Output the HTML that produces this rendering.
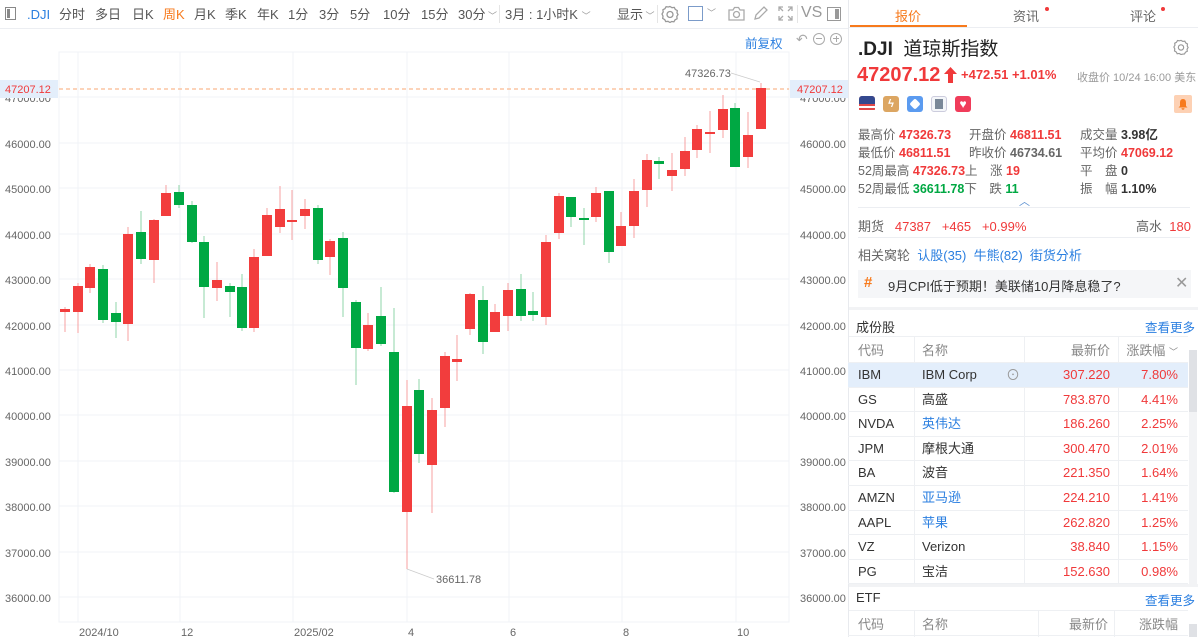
<!DOCTYPE html>
<html><head><meta charset="utf-8"><style>
*{margin:0;padding:0;box-sizing:border-box}
body{width:1198px;height:637px;overflow:hidden;background:#fff;font-family:"Liberation Sans","Noto Sans CJK SC",sans-serif;color:#333;position:relative}
.a{position:absolute;white-space:nowrap}
.tb{font-size:13px;color:#555;top:6px;line-height:18px}
.g{color:#666}.r{color:#f0393a}.gr{color:#00a843}.b{color:#2b7fe0}
.st{font-size:12.5px;line-height:16px}
.row{position:absolute;left:848px;width:340px;height:24.6px;font-size:13px;border-bottom:1px solid #eef0f3}
.row span{position:absolute;top:0;line-height:24px;height:24px}
</style></head><body>
<!-- toolbar -->
<div class="a" style="left:0;top:0;width:848px;height:29px;border-bottom:1px solid #eceef2"></div>
<div class="a" style="left:5px;top:7px;width:11px;height:13px;border:1.5px solid #888"></div>
<div class="a" style="left:7px;top:9px;width:3px;height:9px;background:#888"></div>
<div class="a tb" style="left:27px;color:#2b7fe0">.DJI</div>
<div class="a tb" style="left:59px">分时</div>
<div class="a tb" style="left:95px">多日</div>
<div class="a tb" style="left:132px">日K</div>
<div class="a tb" style="left:163px;color:#f77a1c">周K</div>
<div class="a tb" style="left:194px">月K</div>
<div class="a tb" style="left:225px">季K</div>
<div class="a tb" style="left:257px">年K</div>
<div class="a tb" style="left:288px">1分</div>
<div class="a tb" style="left:319px">3分</div>
<div class="a tb" style="left:350px">5分</div>
<div class="a tb" style="left:383px">10分</div>
<div class="a tb" style="left:421px">15分</div>
<div class="a tb" style="left:458px">30分<span style="font-size:9px;color:#999"> ﹀</span></div>
<div class="a" style="left:499px;top:5px;width:1px;height:18px;background:#e5e5e5"></div>
<div class="a tb" style="left:505px">3月 : 1小时K <span style="font-size:9px;color:#999">﹀</span></div>
<div class="a tb" style="left:617px">显示<span style="font-size:9px;color:#999"> ﹀</span></div>
<div class="a" style="left:657px;top:5px;width:1px;height:18px;background:#e5e5e5"></div>
<svg class="a" style="left:661px;top:5px" width="18" height="18" viewBox="0 0 18 18" fill="none" stroke="#999" stroke-width="1.3"><path d="M9 1.5l2 1.2 2.3-.3 1 2 2 1.2-.3 2.3L17 9.5l-1.2 2 .3 2.3-2 1-1.2 2-2.3-.3L9 17.5l-2-1.2-2.3.3-1-2-2-1.2.3-2.3L1 9l1.2-2-.3-2.3 2-1 1.2-2 2.3.3z"/><circle cx="9" cy="9.5" r="3"/></svg>
<div class="a" style="left:688px;top:6px;width:15px;height:15px;border:1.5px solid #7b9bc9"></div>
<div class="a" style="left:707px;top:6px;font-size:9px;color:#999">﹀</div>
<svg class="a" style="left:728px;top:6px" width="17" height="15" viewBox="0 0 17 15" fill="none" stroke="#aaa" stroke-width="1.3"><path d="M1 4h4l1.5-2.5h4L12 4h4v10H1z"/><circle cx="8.5" cy="8.5" r="3"/></svg>
<svg class="a" style="left:753px;top:6px" width="15" height="15" viewBox="0 0 15 15" fill="none" stroke="#aaa" stroke-width="1.3"><path d="M2 13l1-4 8-8 3 3-8 8z"/></svg>
<svg class="a" style="left:778px;top:6px" width="15" height="15" viewBox="0 0 15 15" fill="none" stroke="#aaa" stroke-width="1.3"><path d="M1 5V1h4M10 1h4v4M14 10v4h-4M5 14H1v-4M1 1l4 4M14 1l-4 4M14 14l-4-4M1 14l4-4"/></svg>
<div class="a" style="left:797px;top:5px;width:1px;height:18px;background:#e5e5e5"></div>
<div class="a" style="left:801px;top:4px;font-size:16px;color:#999">VS</div>
<div class="a" style="left:827px;top:7px;width:14px;height:14px;border:1.5px solid #999"></div>
<div class="a" style="left:835px;top:9px;width:4px;height:10px;background:#999"></div>
<div class="a b" style="left:745px;top:33px;font-size:12.5px">前复权</div>
<div class="a" style="left:796px;top:31px;font-size:14px;color:#aaa">↶</div>
<div class="a" style="left:813px;top:33px;width:12px;height:12px;border:1px solid #aaa;border-radius:50%"></div>
<div class="a" style="left:816px;top:38px;width:6px;height:1px;background:#aaa"></div>
<div class="a" style="left:830px;top:33px;width:12px;height:12px;border:1px solid #aaa;border-radius:50%"></div>
<div class="a" style="left:833px;top:38px;width:6px;height:1px;background:#aaa"></div>
<div class="a" style="left:835.5px;top:36px;width:1px;height:6px;background:#aaa"></div>

<!-- chart -->
<svg class="a" style="left:0;top:0" width="848" height="637" font-family="Liberation Sans,sans-serif" font-size="11">
<g stroke="#f0f3f7" stroke-width="1">
<path d="M59 52H789V622H59z" fill="none"/>
<path d="M59 97H789M59 143H789M59 188H789M59 234H789M59 279H789M59 325H789M59 370H789M59 415H789M59 461H789M59 506H789M59 552H789M59 597H789"/>
<path d="M78 52V622M180 52V622M293 52V622M407 52V622M509 52V622M622 52V622M736 52V622"/>
</g>
<g fill="#666">
<text x="5" y="148">46000.00</text><text x="5" y="193">45000.00</text><text x="5" y="239">44000.00</text><text x="5" y="284">43000.00</text><text x="5" y="330">42000.00</text><text x="5" y="375">41000.00</text><text x="5" y="420">40000.00</text><text x="5" y="466">39000.00</text><text x="5" y="511">38000.00</text><text x="5" y="557">37000.00</text><text x="5" y="602">36000.00</text>
<text x="800" y="148">46000.00</text><text x="800" y="193">45000.00</text><text x="800" y="239">44000.00</text><text x="800" y="284">43000.00</text><text x="800" y="330">42000.00</text><text x="800" y="375">41000.00</text><text x="800" y="420">40000.00</text><text x="800" y="466">39000.00</text><text x="800" y="511">38000.00</text><text x="800" y="557">37000.00</text><text x="800" y="602">36000.00</text>
<text x="5" y="102">47000.00</text><text x="800" y="102">47000.00</text>
<text x="79" y="636">2024/10</text><text x="181" y="636">12</text><text x="294" y="636">2025/02</text><text x="408" y="636">4</text><text x="510" y="636">6</text><text x="623" y="636">8</text><text x="737" y="636">10</text>
<text x="685" y="77">47326.73</text><text x="436" y="583">36611.78</text>
</g>
<path d="M731 73L760 82M407 569L434 579" stroke="#ccc" stroke-width="0.8"/>
<rect x="0" y="80" width="58" height="18" fill="#e3eefb"/><rect x="790" y="80" width="58" height="18" fill="#e3eefb"/>
<path d="M59 89H789" stroke="#f9b98f" stroke-dasharray="4 3" stroke-width="1.2"/>
<text x="5" y="93" fill="#f0393a">47207.12</text><text x="797" y="93" fill="#f0393a">47207.12</text>
<g stroke-width="1">
<g fill="#f23d3d" stroke="#f7a0a0">
<path d="M65 307V332M78 283V333M90 264V293M128 227V341M154 219V283M166 185V216M217 262V301M254 249V332M267 208V256M280 186V233M292 190V240M305 199V229M330 239V275M368 313V351M407 380V569M432 398V513M445 352V427M457 335V381M470 293V335M495 304V332M508 283V331M546 235V325M559 193V239M596 187V222M621 212V246M634 179V238M647 154V207M672 153V191M685 137V176M697 125V158M710 111V153M723 95V138M748 112V168M761 83V129"/>
</g>
<g stroke="#8fd6a8">
<path d="M103 265V323M116 302V338M141 211V264M179 185V208M192 201V243M204 236V318M230 283V317M242 274V331M318 205V264M343 232V317M356 300V385M381 287V346M394 308V493M419 379V463M483 286V354M521 274V321M533 292V321M571 197V227M584 208V245M609 191V263M659 157V179M735 103V167"/>
</g>
</g>
<g fill="#f23d3d">
<rect x="60" y="309" width="10" height="3"/><rect x="73" y="286" width="10" height="26"/><rect x="85" y="267" width="10" height="21"/><rect x="123" y="234" width="10" height="90"/><rect x="149" y="220" width="10" height="40"/><rect x="161" y="193" width="10" height="23"/><rect x="212" y="280" width="10" height="8"/><rect x="249" y="257" width="10" height="71"/><rect x="262" y="215" width="10" height="41"/><rect x="275" y="209" width="10" height="18"/><rect x="287" y="220" width="10" height="2"/><rect x="300" y="209" width="10" height="7"/><rect x="325" y="241" width="10" height="16"/><rect x="363" y="325" width="10" height="24"/><rect x="402" y="406" width="10" height="106"/><rect x="427" y="410" width="10" height="55"/><rect x="440" y="356" width="10" height="52"/><rect x="452" y="359" width="10" height="3"/><rect x="465" y="294" width="10" height="35"/><rect x="490" y="312" width="10" height="20"/><rect x="503" y="290" width="10" height="26"/><rect x="541" y="242" width="10" height="75"/><rect x="554" y="196" width="10" height="37"/><rect x="591" y="193" width="10" height="24"/><rect x="616" y="226" width="10" height="20"/><rect x="629" y="191" width="10" height="35"/><rect x="642" y="160" width="10" height="30"/><rect x="667" y="170" width="10" height="6"/><rect x="680" y="151" width="10" height="18"/><rect x="692" y="129" width="10" height="21"/><rect x="705" y="132" width="10" height="2"/><rect x="718" y="109" width="10" height="21"/><rect x="743" y="135" width="10" height="22"/><rect x="756" y="88" width="10" height="41"/>
</g>
<g fill="#00a843">
<rect x="98" y="269" width="10" height="51"/><rect x="111" y="313" width="10" height="9"/><rect x="136" y="232" width="10" height="27"/><rect x="174" y="192" width="10" height="13"/><rect x="187" y="205" width="10" height="37"/><rect x="199" y="242" width="10" height="45"/><rect x="225" y="286" width="10" height="6"/><rect x="237" y="287" width="10" height="41"/><rect x="313" y="208" width="10" height="52"/><rect x="338" y="238" width="10" height="50"/><rect x="351" y="302" width="10" height="46"/><rect x="376" y="316" width="10" height="28"/><rect x="389" y="352" width="10" height="140"/><rect x="414" y="390" width="10" height="64"/><rect x="478" y="300" width="10" height="42"/><rect x="516" y="289" width="10" height="27"/><rect x="528" y="311" width="10" height="4"/><rect x="566" y="197" width="10" height="20"/><rect x="579" y="218" width="10" height="2"/><rect x="604" y="191" width="10" height="61"/><rect x="654" y="161" width="10" height="3"/><rect x="730" y="108" width="10" height="59"/>
</g>
</svg>

<!-- right panel -->
<div class="a" style="left:848px;top:0;width:1px;height:637px;background:#e8eaee"></div>
<div class="a" style="left:849px;top:27px;width:349px;height:1px;background:#eceef2"></div>
<div class="a" style="left:850px;top:25px;width:117px;height:2px;background:#f77a1c"></div>
<div class="a" style="left:895px;top:6px;font-size:13px;color:#f77a1c">报价</div>
<div class="a" style="left:1013px;top:6px;font-size:13px;color:#666">资讯</div>
<div class="a" style="left:1045px;top:7px;width:4px;height:4px;border-radius:50%;background:#f0393a"></div>
<div class="a" style="left:1130px;top:6px;font-size:13px;color:#666">评论</div>
<div class="a" style="left:1161px;top:7px;width:4px;height:4px;border-radius:50%;background:#f0393a"></div>

<div class="a" style="left:858px;top:37px;font-size:19px;color:#222;line-height:26px"><b>.DJI</b>&nbsp; 道琼斯指数</div>
<svg class="a" style="left:1173px;top:39px" width="16" height="16" viewBox="0 0 18 18" fill="none" stroke="#999" stroke-width="1.3"><path d="M9 1.5l2 1.2 2.3-.3 1 2 2 1.2-.3 2.3L17 9.5l-1.2 2 .3 2.3-2 1-1.2 2-2.3.3L9 17.5l-2-1.2-2.3.3-1-2-2-1.2.3-2.3L1 9l1.2-2-.3-2.3 2-1 1.2-2 2.3.3z"/><circle cx="9" cy="9.5" r="3"/></svg>
<div class="a r" style="left:857px;top:63px;font-size:20px;font-weight:bold;line-height:24px">47207.12</div>
<svg class="a" style="left:944px;top:67px" width="13" height="16" viewBox="0 0 13 16"><path d="M6.5 0L13 7H9V16H4V7H0z" fill="#f0393a"/></svg>
<div class="a r" style="left:961px;top:67px;font-size:13px;font-weight:bold">+472.51 +1.01%</div>
<div class="a" style="left:1077px;top:69px;font-size:11px;color:#999">收盘价 10/24 16:00 美东</div>

<div class="a" style="left:859px;top:96px;width:16px;height:16px;border-radius:3px;background:repeating-linear-gradient(#e04848 0 2px,#fff 2px 4px)"></div>
<div class="a" style="left:859px;top:96px;width:16px;height:8px;border-radius:3px 3px 0 0;background:#34498f"></div>
<div class="a" style="left:883px;top:96px;width:16px;height:16px;border-radius:3px;background:#dca662;color:#fff;font-size:11px;text-align:center;line-height:16px;font-weight:bold">ϟ</div>
<div class="a" style="left:907px;top:96px;width:16px;height:16px;border-radius:3px;background:#5b9bf0"></div>
<div class="a" style="left:911px;top:100px;width:8px;height:8px;border-radius:2px;background:#fff;transform:rotate(45deg)"></div>
<div class="a" style="left:931px;top:96px;width:16px;height:16px;border-radius:3px;border:1px solid #ccd;background:#f4f6f9"></div>
<div class="a" style="left:935px;top:99px;width:8px;height:10px;background:#7a8898"></div>
<div class="a" style="left:955px;top:96px;width:16px;height:16px;border-radius:3px;background:#f03c5a;color:#fff;font-size:12px;text-align:center;line-height:16px">♥</div>
<div class="a" style="left:1174px;top:95px;width:18px;height:18px;border-radius:2px;background:#fdd1b4"></div>
<svg class="a" style="left:1177px;top:98px" width="12" height="12" viewBox="0 0 12 12"><path d="M6 1C3.5 1 3 3 3 5v3L1.5 9.5h9L9 8V5C9 3 8.5 1 6 1zM4.5 10.3a1.5 1.5 0 0 0 3 0z" fill="#f77a1c"/></svg>

<div class="a st" style="left:858px;top:127px"><span class="g">最高价</span> <b class="r">47326.73</b></div>
<div class="a st" style="left:969px;top:127px"><span class="g">开盘价</span> <b class="r">46811.51</b></div>
<div class="a st" style="left:1080px;top:127px"><span class="g">成交量</span> <b>3.98亿</b></div>
<div class="a st" style="left:858px;top:145px"><span class="g">最低价</span> <b class="r">46811.51</b></div>
<div class="a st" style="left:969px;top:145px"><span class="g">昨收价</span> <b class="g">46734.61</b></div>
<div class="a st" style="left:1080px;top:145px"><span class="g">平均价</span> <b class="r">47069.12</b></div>
<div class="a st" style="left:858px;top:163px"><span class="g">52周最高</span> <b class="r">47326.73</b><span class="g">上　涨</span> <b class="r">19</b></div>
<div class="a st" style="left:1080px;top:163px"><span class="g">平　盘</span> <b>0</b></div>
<div class="a st" style="left:858px;top:181px"><span class="g">52周最低</span> <b class="gr">36611.78</b><span class="g">下　跌</span> <b class="gr">11</b></div>
<div class="a st" style="left:1080px;top:181px"><span class="g">振　幅</span> <b>1.10%</b></div>
<div class="a" style="left:1019px;top:193px;font-size:11px;color:#5a8fd0">︿</div>
<div class="a" style="left:858px;top:207px;width:332px;height:1px;background:#eceef2"></div>
<div class="a" style="left:858px;top:216px;font-size:13px"><span class="g">期货</span>&nbsp;&nbsp;&nbsp;<span class="r">47387&nbsp;&nbsp;&nbsp;+465&nbsp;&nbsp;&nbsp;+0.99%</span></div>
<div class="a" style="left:1136px;top:216px;font-size:13px"><span class="g">高水</span>&nbsp;&nbsp;<span class="r">180</span></div>
<div class="a" style="left:858px;top:237px;width:332px;height:1px;background:#eceef2"></div>
<div class="a" style="left:858px;top:245px;font-size:13px"><span class="g">相关窝轮</span>&nbsp; <span class="b">认股(35)&nbsp; 牛熊(82)&nbsp; 街货分析</span></div>
<div class="a" style="left:858px;top:270px;width:333px;height:28px;background:#f5f6f8"></div>
<div class="a" style="left:864px;top:274px;font-size:15px;color:#f77a1c;font-weight:bold">#</div>
<div class="a" style="left:888px;top:276px;font-size:13px;color:#333">9月CPI低于预期！美联储10月降息稳了?</div>
<div class="a" style="left:1175px;top:273px;font-size:16px;color:#999">✕</div>
<div class="a" style="left:849px;top:307px;width:349px;height:3px;background:#f2f3f5"></div>
<div class="a" style="left:856px;top:317px;font-size:13px;color:#333">成份股</div>
<div class="a b" style="left:1145px;top:317px;font-size:12.5px">查看更多</div>
<div class="a" style="left:849px;top:336px;width:339px;height:1px;background:#eef0f3"></div>
<div class="row" style="top:337px;height:26px;color:#888"><span style="left:10px;line-height:28px">代码</span><span style="left:74px;line-height:28px">名称</span><span style="right:78px;line-height:28px">最新价</span><span style="right:10px;line-height:28px">涨跌幅 <small style="font-size:9px">﹀</small></span></div>
<div class="a" style="left:914px;top:337px;width:1px;height:250px;background:#eef0f3"></div>
<div class="a" style="left:1024px;top:337px;width:1px;height:250px;background:#eef0f3"></div>
<div class="a" style="left:1118px;top:337px;width:1px;height:250px;background:#eef0f3"></div>
<div class="a" style="left:1189px;top:350px;width:8px;height:237px;background:#f2f3f5"></div>
<div class="a" style="left:1189px;top:350px;width:8px;height:62px;background:#dfe1e5"></div>

<div class="row" style="top:363px;background:#e3eefb"><span style="left:10px">IBM</span><span style="left:74px">IBM Corp</span><span style="left:158px;color:#999;font-size:14px">⊙</span><span class="r" style="right:78px">307.220</span><span class="r" style="right:10px">7.80%</span></div>
<div class="row" style="top:387.6px"><span style="left:10px">GS</span><span style="left:74px">高盛</span><span class="r" style="right:78px">783.870</span><span class="r" style="right:10px">4.41%</span></div>
<div class="row" style="top:412.2px"><span style="left:10px">NVDA</span><span class="b" style="left:74px">英伟达</span><span class="r" style="right:78px">186.260</span><span class="r" style="right:10px">2.25%</span></div>
<div class="row" style="top:436.8px"><span style="left:10px">JPM</span><span style="left:74px">摩根大通</span><span class="r" style="right:78px">300.470</span><span class="r" style="right:10px">2.01%</span></div>
<div class="row" style="top:461.4px"><span style="left:10px">BA</span><span style="left:74px">波音</span><span class="r" style="right:78px">221.350</span><span class="r" style="right:10px">1.64%</span></div>
<div class="row" style="top:486px"><span style="left:10px">AMZN</span><span class="b" style="left:74px">亚马逊</span><span class="r" style="right:78px">224.210</span><span class="r" style="right:10px">1.41%</span></div>
<div class="row" style="top:510.6px"><span style="left:10px">AAPL</span><span class="b" style="left:74px">苹果</span><span class="r" style="right:78px">262.820</span><span class="r" style="right:10px">1.25%</span></div>
<div class="row" style="top:535.2px"><span style="left:10px">VZ</span><span style="left:74px">Verizon</span><span class="r" style="right:78px">38.840</span><span class="r" style="right:10px">1.15%</span></div>
<div class="row" style="top:559.8px"><span style="left:10px">PG</span><span style="left:74px">宝洁</span><span class="r" style="right:78px">152.630</span><span class="r" style="right:10px">0.98%</span></div>
<div class="a" style="left:849px;top:584px;width:349px;height:3px;background:#f2f3f5"></div>
<div class="a" style="left:856px;top:590px;font-size:13px;color:#333">ETF</div>
<div class="a b" style="left:1145px;top:590px;font-size:12.5px">查看更多</div>
<div class="a" style="left:849px;top:610px;width:339px;height:1px;background:#eef0f3"></div>
<div class="row" style="top:611px;color:#888"><span style="left:10px;line-height:28px">代码</span><span style="left:74px;line-height:28px">名称</span><span style="right:80px;line-height:28px">最新价</span><span style="right:10px;line-height:28px">涨跌幅</span></div>
<div class="a" style="left:914px;top:611px;width:1px;height:26px;background:#eef0f3"></div>
<div class="a" style="left:1038px;top:611px;width:1px;height:26px;background:#eef0f3"></div>
<div class="a" style="left:1114px;top:611px;width:1px;height:26px;background:#eef0f3"></div>
<div class="a" style="left:1189px;top:624px;width:8px;height:13px;background:#dfe1e5"></div>
</body></html>
